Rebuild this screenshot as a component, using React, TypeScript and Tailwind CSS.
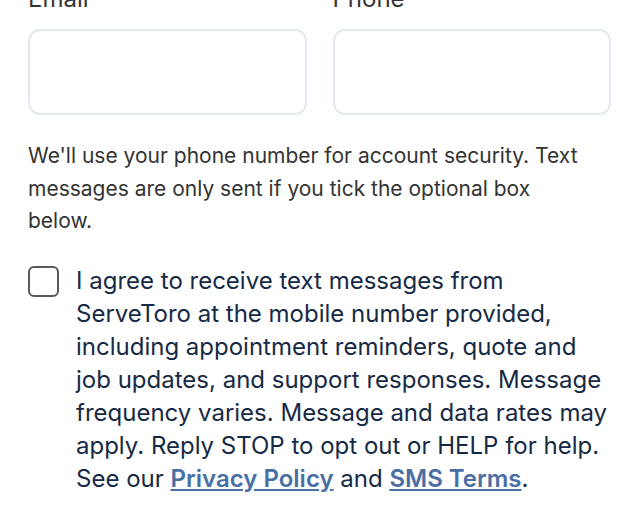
export default function App() {
  return (
    <div className="min-h-screen bg-white pl-7 pr-[29px] font-['Inter',sans-serif]">
      <div className="-mt-[18px] grid grid-cols-2 gap-[26px]">
        <label className="flex flex-col gap-[14px]">
          <span className="text-[24px] leading-[33px] text-[#333333]">Email</span>
          <input type="email" className="h-[86px] rounded-xl border-2 border-[#e2e8f0] bg-white px-4 outline-none" />
        </label>
        <label className="flex flex-col gap-[14px]">
          <span className="text-[24px] leading-[33px] text-[#333333]">Phone</span>
          <input type="tel" className="h-[86px] rounded-xl border-2 border-[#e2e8f0] bg-white px-4 outline-none" />
        </label>
      </div>

      <p className="mt-[25px] max-w-[565px] text-[21px] leading-[32.5px] text-[#333333]">
        We'll use your phone number for account security. Text messages are only sent if you tick the optional box below.
      </p>

      <label className="mt-[26px] flex items-start gap-[17px]">
        <input
          type="checkbox"
          className="mt-[2.5px] h-[31px] w-[31px] shrink-0 appearance-none rounded-[6px] border-2 border-[#595959] bg-white"
        />
        <span className="text-[24px] leading-[33px] text-[#172a45]">
          I agree to receive text messages from ServeToro at the mobile number provided, including appointment reminders, quote and job updates, and support responses. Message frequency varies. Message and data rates may apply. Reply STOP to opt out or HELP for help. See our{' '}
          <a href="#" className="font-semibold text-[#4a6fa5] underline underline-offset-2">Privacy Policy</a> and{' '}
          <a href="#" className="font-semibold text-[#4a6fa5] underline underline-offset-2">SMS Terms</a>.
        </span>
      </label>
    </div>
  );
}
